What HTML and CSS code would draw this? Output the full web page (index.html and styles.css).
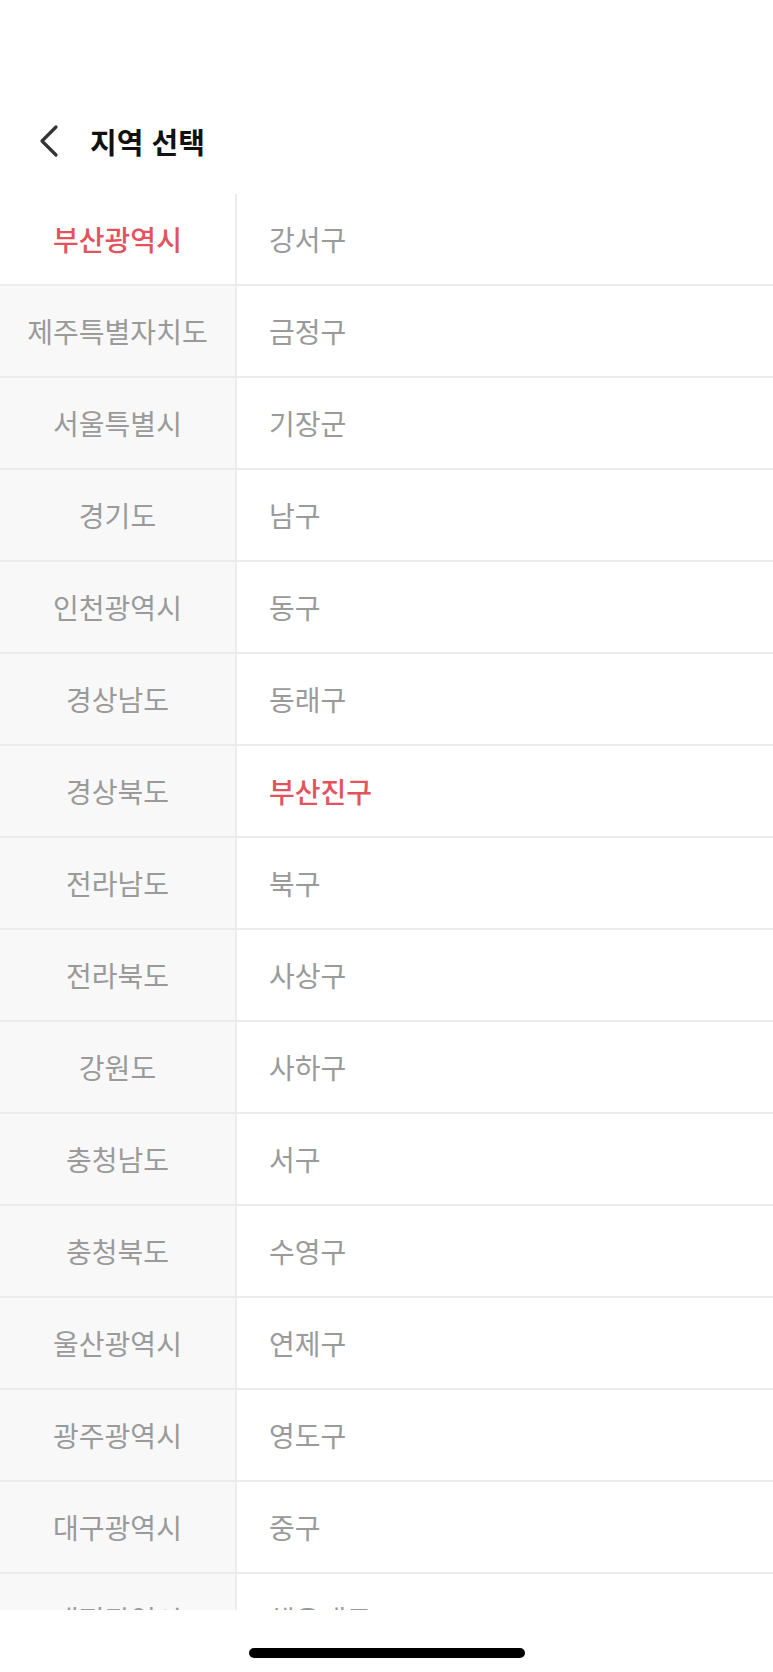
FILE: index.html
```html
<!DOCTYPE html>
<html lang="ko">
<head>
<meta charset="utf-8">
<title>지역 선택</title>
<link rel="stylesheet" href="styles.css">
</head>
<body>
<div class="screen">
  <div class="statusbar"></div>
  <header class="header">
    <svg class="back" viewBox="0 0 22 34" width="22" height="34" aria-hidden="true">
      <polyline points="18,3 4,17 18,31" fill="none" stroke="#333" stroke-width="3.2" stroke-linecap="round" stroke-linejoin="round"/>
    </svg>
    <h1 class="title">지역 선택</h1>
  </header>
  <main class="picker">
    <ul class="col col-city">
      <li class="item is-selected">부산광역시</li>
      <li class="item">제주특별자치도</li>
      <li class="item">서울특별시</li>
      <li class="item">경기도</li>
      <li class="item">인천광역시</li>
      <li class="item">경상남도</li>
      <li class="item">경상북도</li>
      <li class="item">전라남도</li>
      <li class="item">전라북도</li>
      <li class="item">강원도</li>
      <li class="item">충청남도</li>
      <li class="item">충청북도</li>
      <li class="item">울산광역시</li>
      <li class="item">광주광역시</li>
      <li class="item">대구광역시</li>
      <li class="item">대전광역시</li>
      <li class="item">세종특별자치시</li>
    </ul>
    <ul class="col col-district">
      <li class="item">강서구</li>
      <li class="item">금정구</li>
      <li class="item">기장군</li>
      <li class="item">남구</li>
      <li class="item">동구</li>
      <li class="item">동래구</li>
      <li class="item is-selected">부산진구</li>
      <li class="item">북구</li>
      <li class="item">사상구</li>
      <li class="item">사하구</li>
      <li class="item">서구</li>
      <li class="item">수영구</li>
      <li class="item">연제구</li>
      <li class="item">영도구</li>
      <li class="item">중구</li>
      <li class="item">해운대구</li>
    </ul>
  </main>
  <footer class="home">
    <div class="home-bar"></div>
  </footer>
</div>
</body>
</html>
```
FILE: styles.css
```css
* { box-sizing: border-box; }

html, body {
  margin: 0;
  padding: 0;
  background: #fff;
}

body {
  font-family: "Noto Sans CJK KR", "Noto Sans", sans-serif;
  color: #999;
}

.screen {
  width: 773px;
  height: 1672px;
  display: flex;
  flex-direction: column;
  overflow: hidden;
}

.statusbar {
  height: 88px;
  flex: none;
}

.header {
  height: 106px;
  flex: none;
  display: flex;
  align-items: center;
  padding-left: 38px;
  gap: 30px;
}

.back {
  display: block;
  flex: none;
}

.title {
  margin: 0;
  font-size: 29px;
  font-weight: 700;
  color: #111;
  letter-spacing: 0;
  line-height: 1;
}

.picker {
  height: 1416px;
  flex: none;
  display: flex;
  overflow: hidden;
}

.col {
  list-style: none;
  margin: 0;
  padding: 0;
}

.col-city {
  width: 237px;
  flex: none;
  background: #f8f8f8;
  border-right: 2px solid #ececec;
}

.col-district {
  flex: 1;
  background: #fff;
}

.item {
  height: 92px;
  border-bottom: 2px solid #ececec;
  display: flex;
  align-items: center;
  font-size: 28px;
  font-weight: 400;
  color: #9a9a9a;
  white-space: nowrap;
}

.col-city .item {
  justify-content: center;
}

.col-district .item {
  padding-left: 32px;
}

.item.is-selected {
  color: #e4535d;
  font-weight: 500;
}

.col-city .item.is-selected {
  background: #fff;
}

.home {
  height: 62px;
  flex: none;
  display: flex;
  justify-content: center;
  padding-top: 38px;
}

.home-bar {
  width: 276px;
  height: 10px;
  border-radius: 5px;
  background: #000;
}
```
